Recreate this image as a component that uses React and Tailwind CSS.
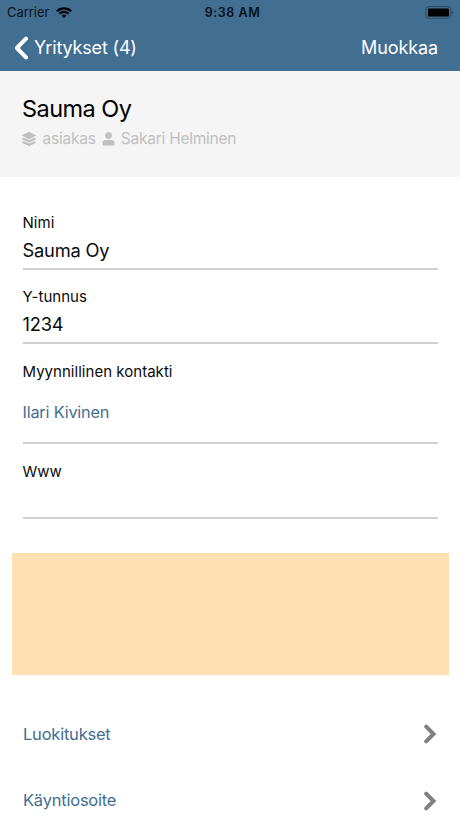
import { FaLayerGroup } from "react-icons/fa";

function StatusBar() {
  return (
    <div className="flex h-6 items-center justify-between pr-[6px] pl-[7px] text-[13px] text-[#07131d]">
      <div className="flex w-[100px] items-center gap-[7px] pt-px">
        <span className="tracking-[-0.05px]">Carrier</span>
        <svg className="h-[11px] w-4" viewBox="0 0 16 11" fill="none" stroke="#000" strokeWidth="2.3">
          <path d="M.9 4.3a10.1 10.1 0 0 1 14.2 0" />
          <path d="M3.4 6.8a6.6 6.6 0 0 1 9.2 0" />
          <path d="M8 10.9 5.7 8.6a3.3 3.3 0 0 1 4.6 0z" fill="#000" stroke="none" />
        </svg>
      </div>
      <span className="pl-[4px] pt-[2px] text-[12.5px] font-semibold tracking-[0.55px]">9:38 AM</span>
      <div className="flex w-[100px] justify-end">
        <svg className="h-[13px] w-[29px]" viewBox="0 0 29 13">
          <rect x=".8" y=".6" width="25.2" height="11.6" rx="3.2" fill="none" stroke="#2a4a63" />
          <rect x="3" y="2.6" width="21" height="7.8" rx="1" fill="#000" />
          <path d="M27 4.4q1.4.8 1.4 2T27 8.4z" fill="#2a4a63" />
        </svg>
      </div>
    </div>
  );
}

function Field({ label, value, height, link }) {
  return (
    <div className={`flex flex-col border-b-2 border-[#d0d0d1] ${height}`}>
      <span className="pt-[17.5px] text-[15px] leading-5 tracking-[0.03px] text-[#0b0b0b]">{label}</span>
      {link ? (
        <span className="pt-[18.5px] text-[16.3px] leading-6 tracking-[-0.2px] text-[#436e91]">{value}</span>
      ) : (
        <span className="pt-[5px] text-[18.3px] leading-6 tracking-[-0.2px] text-[#0b0b0b]">{value}</span>
      )}
    </div>
  );
}

function LinkRow({ label }) {
  return (
    <div className="flex h-[66.5px] shrink-0 items-center justify-between pr-[23px] pl-[23px] text-[16.5px] tracking-[-0.22px] text-[#436e91]">
      <span>{label}</span>
      <svg className="h-5 w-[13px]" viewBox="0 0 13 20" fill="none" stroke="#808080" strokeWidth="4" strokeLinecap="round">
        <path d="M2.2 2.6 9.5 10l-7.3 7.4" />
      </svg>
    </div>
  );
}

export default function App() {
  return (
    <div className="flex h-[818px] w-[460px] flex-col overflow-hidden bg-white font-['Inter',sans-serif]">
      <header className="h-[71px] shrink-0 bg-[#426e91]">
        <StatusBar />
        <div className="flex h-[47px] items-center justify-between pr-[22px] pl-[14px] text-[18px] text-white">
          <div className="flex items-center gap-[6px]">
            <svg className="h-6 w-[14px]" viewBox="0 0 14 24" fill="none" stroke="#fff" strokeWidth="4" strokeLinecap="round" strokeLinejoin="round">
              <path d="M12 2.6 2.9 12l9.1 9.4" />
            </svg>
            <span className="tracking-[-0.17px]">Yritykset (4)</span>
          </div>
          <span className="tracking-[-0.1px]">Muokkaa</span>
        </div>
      </header>
      <section className="h-[106px] shrink-0 bg-[#f5f5f5] px-[22px] pt-[22px]">
        <h1 className="text-[23.5px] leading-8 tracking-[-0.55px] text-black">Sauma Oy</h1>
        <div className="mt-1 flex items-center text-[15.5px] leading-5 tracking-[-0.25px] text-[#c0c0c0]">
          <FaLayerGroup className="size-[14px]" />
          <span className="ml-[6.5px] tracking-[-0.2px]">asiakas</span>
          <svg className="ml-[6px] h-[14px] w-[13px]" viewBox="0 0 13 14" fill="currentColor">
            <circle cx="6.5" cy="3.6" r="3.4" />
            <path d="M.6 13.4v-2.6c0-1.7 1.2-2.7 2.8-2.7h6.2c1.6 0 2.8 1 2.8 2.7v2.6z" />
          </svg>
          <span className="ml-[6px]">Sakari Helminen</span>
        </div>
      </section>
      <section className="shrink-0 px-[22.5px] pt-[18px]">
        <Field label="Nimi" value="Sauma Oy" height="h-[74.5px]" />
        <Field label="Y-tunnus" value="1234" height="h-[74.5px]" />
        <Field label="Myynnillinen kontakti" value="Ilari Kivinen" height="h-[100px]" link />
        <Field label="Www" value="" height="h-[74.5px]" />
      </section>
      <div className="mx-[11.5px] mt-[34.5px] h-[122px] shrink-0 bg-[#fde1b3]" />
      <nav className="mt-[26px] shrink-0">
        <LinkRow label="Luokitukset" />
        <LinkRow label="Käyntiosoite" />
      </nav>
    </div>
  );
}
